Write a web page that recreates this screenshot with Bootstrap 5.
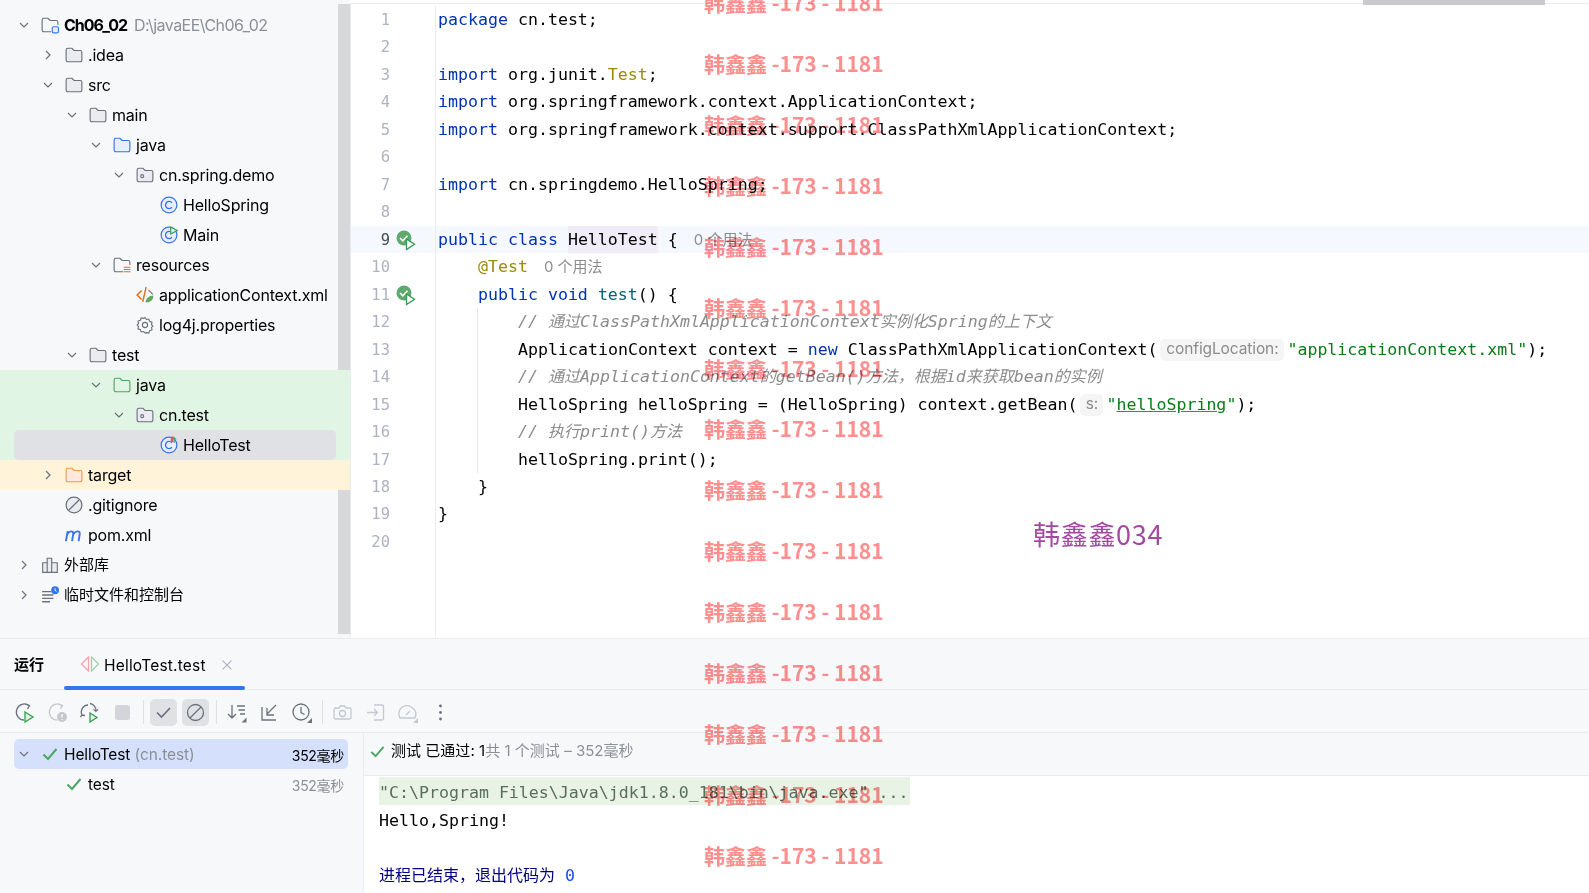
<!doctype html>
<html lang="zh"><head><meta charset="utf-8"><title>HelloTest</title>
<link href="https://cdn.jsdelivr.net/npm/bootstrap@5.3.0/dist/css/bootstrap.min.css" rel="stylesheet">
<style>
html,body{height:893px;overflow:hidden;background:#fff}
body{font-family:Inter,"Noto Sans CJK SC",sans-serif;color:#000}
.ide{width:1589px;height:893px;overflow:hidden}
.top-area{height:638px;flex:none}
.tree-panel{width:350px;flex:none;background:#f7f8fa;padding-top:10px;font-size:16px;letter-spacing:-.2px}
.tree-scroll{position:absolute;top:4px;right:0;width:12px;height:630px;background:rgba(0,0,0,.13)}
.trow{height:30px;position:relative;white-space:nowrap}
.trow.green{background:#e1f5e4}
.trow.amber{background:#fff3d9}
.trow.sel::before{content:"";position:absolute;left:14px;right:14px;top:0;bottom:0;background:#dfe1e5;border-radius:5px}
.trow>*{position:relative}
.lv0{padding-left:16px}.lv1{padding-left:40px}.lv2{padding-left:64px}.lv3{padding-left:88px}.lv4{padding-left:111px}.lv5{padding-left:135px}
.chev{width:16px;height:16px;flex:none}
.tico{width:18px;height:18px;flex:none;margin:0 5px 0 9px}
.pname{font-weight:700;letter-spacing:-1px}
.pathtxt{color:#8c8f97;margin-left:7px;letter-spacing:-.55px}
.cj15{font-size:15px;letter-spacing:0}
.editor{flex:1;min-width:0;position:relative;border-top:1px solid #ebecf0;margin-top:3px;padding-top:2px;border-left:1px solid #ebecf0;font-family:"DejaVu Sans Mono","Noto Sans CJK SC",monospace;font-size:16.6px;overflow:hidden}
.gutter{width:85px;flex:none;border-right:1px solid #ebecf0;color:#aeb3c2;font-size:15.5px}
.gl{height:27.47px;position:relative;padding-right:45px;text-align:right;line-height:29.47px}
.gl svg{position:absolute;left:45px;top:4px;width:21px;height:21px;overflow:visible}
.gl.cur{background:#f5f8fe;color:#4a4e59}
.codecol{flex:1;min-width:0}
.cl{height:27.47px;line-height:27.47px;white-space:pre;padding-left:2px}
.cl.cur{background:#f5f8fe}
.guide{margin-left:41px;border-left:1px solid #e6e7ea}
.guide .cl{padding-left:40px}
.k{color:#0033b3}.a{color:#9e880d}.s{color:#067d17}.m{color:#00627a}.c{color:#8c8c8c;font-style:italic}
.cj{font-size:16px}
.idhl{background:#f0edf8;display:inline-block;height:27.47px}
.usage{font-family:Inter,"Noto Sans CJK SC",sans-serif;color:#8c8c8c;font-size:15px;margin-left:6px}
.hint{font-family:Inter,sans-serif;font-size:15.5px;color:#8c8c8c;background:#f5f5f5;border-radius:5px;display:inline-block;height:22px;line-height:20px;text-align:center;margin:0 3px;vertical-align:1px;letter-spacing:-.1px}
.h1w{width:124px}.h2w{width:23px}
.ul{text-decoration:underline;text-decoration-color:#6c6c6c}
.thumb{position:absolute;top:0;left:1363px;width:182px;height:5px;background:#c9c9ce;z-index:3}
.bottom{height:255px;flex:none;background:#f7f8fa;border-top:1px solid #ebecf0}
.tabs{height:52px;border-bottom:1px solid #ebecf0;position:relative;font-size:15px}
.tabs .runlbl{margin-left:14px;font-weight:600;width:50px;padding-top:2px}
.tabx{width:181px;height:100%;padding-left:16px;position:relative}
.tabx::after{content:"";position:absolute;left:0;right:0;bottom:-1px;height:4px;background:#3574f0;border-radius:2px}
.tabname{margin-left:4px;font-size:15.5px;letter-spacing:.2px;padding-top:2px}
.tabclose{margin-left:14px;margin-top:2px}
.tbar{height:43px;border-bottom:1px solid #ebecf0;padding:2px 0 0 11px}
.tb{width:27px;height:27px;border-radius:5px;margin-right:5.5px;flex:none}
.tb svg{width:21px;height:21px}
.tb.on{background:#dfe1e5}
.tsep{width:1px;height:24px;background:#dfe1e5;margin:0 6px 0 1.5px;flex:none}
.res-left{width:364px;flex:none;border-right:1px solid #ebecf0;padding-top:6px;font-size:15.5px;letter-spacing:-.1px}
.rrow{height:30px;margin:0 15px 0 14px;padding-right:4px;white-space:nowrap}
.rrow.sel{background:#d5e1fc;border-radius:5px}
.rrow svg{flex:none}
.rchev{margin-left:2px}
.rchk{margin-left:10px}
.rchk2{margin-left:52px}
.rlabel{margin-left:6px;padding-top:2px}
.gray{color:#8c8f97}
.rtime{margin-left:auto;font-size:14px;letter-spacing:-.3px;padding-top:2px}
.res-right{flex:1;min-width:0}
.summary{height:43px;padding:0 0 5px 6px;font-size:15px;border-bottom:1px solid #ebecf0;white-space:nowrap}
.sumtxt{margin-left:6px;letter-spacing:.03px}
.console{background:#fff;height:117px;padding-left:15px;padding-top:1px;font-family:"DejaVu Sans Mono","Noto Sans CJK SC",monospace;font-size:16.6px}
.con{height:27.47px;line-height:31px;white-space:pre}
.con.cmd{background:#e8f3e6;width:531px;height:28px;color:#5a6e5c}
.exit{color:#000080}.num{color:#1750eb}
.wm{position:absolute;left:704px;top:-28px;z-index:5;pointer-events:none;mix-blend-mode:multiply}
.wm div{height:60.93px;line-height:60.93px;font-size:21px;font-weight:700;color:#ff8f8f;white-space:pre;font-family:"Noto Sans CJK SC",sans-serif}
.wm2{position:absolute;left:1033px;top:514px;z-index:5;font-size:27px;line-height:40px;color:#a349a4;font-family:"Noto Sans CJK SC",sans-serif;letter-spacing:.7px}
</style></head>
<body>
<svg width="0" height="0" class="position-absolute">
<defs>
<symbol id="cd" viewBox="0 0 16 16"><path d="M4 6l4 4 4-4" fill="none" stroke="#6c707e" stroke-width="1.2"/></symbol>
<symbol id="cr" viewBox="0 0 16 16"><path d="M6 4l4 4-4 4" fill="none" stroke="#6c707e" stroke-width="1.2"/></symbol>
<symbol id="fo" viewBox="0 0 16 16"><path d="M1 3.500A1.500 1.500 0 0 1 2.500 2h3.700l1.800 2h5.500A1.500 1.500 0 0 1 15 5.500v7a1.500 1.500 0 0 1-1.500 1.500h-11A1.500 1.500 0 0 1 1 12.500z" fill="#ebecf0" stroke="#6c707e"/></symbol>
<symbol id="fb" viewBox="0 0 16 16"><path d="M1 3.500A1.500 1.500 0 0 1 2.500 2h3.700l1.800 2h5.500A1.500 1.500 0 0 1 15 5.500v7a1.500 1.500 0 0 1-1.500 1.500h-11A1.500 1.500 0 0 1 1 12.500z" fill="#e7effd" stroke="#3574f0"/></symbol>
<symbol id="fg" viewBox="0 0 16 16"><path d="M1 3.500A1.500 1.500 0 0 1 2.500 2h3.700l1.800 2h5.500A1.500 1.500 0 0 1 15 5.500v7a1.500 1.500 0 0 1-1.500 1.500h-11A1.500 1.500 0 0 1 1 12.500z" fill="#e1f5e4" stroke="#4da565"/></symbol>
<symbol id="fy" viewBox="0 0 16 16"><path d="M1 3.500A1.500 1.500 0 0 1 2.500 2h3.700l1.800 2h5.500A1.500 1.500 0 0 1 15 5.500v7a1.500 1.500 0 0 1-1.500 1.500h-11A1.500 1.500 0 0 1 1 12.500z" fill="#ffe9dc" stroke="#f2994f"/></symbol>
<symbol id="fp" viewBox="0 0 16 16"><path d="M1 3.500A1.500 1.500 0 0 1 2.500 2h3.700l1.800 2h5.500A1.500 1.500 0 0 1 15 5.500v7a1.500 1.500 0 0 1-1.500 1.500h-11A1.500 1.500 0 0 1 1 12.500z" fill="#ebecf0" stroke="#6c707e"/><circle cx="5.500" cy="9" r="1.300" fill="none" stroke="#6c707e"/></symbol>
<symbol id="fm" viewBox="0 0 16 16"><path d="M9 14H2.500A1.500 1.500 0 0 1 1 12.500v-9A1.500 1.500 0 0 1 2.500 2h3.700l1.800 2h5.500A1.500 1.500 0 0 1 15 5.500V8" fill="#f7f8fa" stroke="#6c707e"/><rect x="10" y="9.500" width="5.500" height="5.500" rx="1.300" fill="#e7effd" stroke="#3574f0"/></symbol>
<symbol id="fr" viewBox="0 0 16 16"><path d="M9 14H2.500A1.500 1.500 0 0 1 1 12.500v-9A1.500 1.500 0 0 1 2.500 2h3.700l1.800 2h5.500A1.500 1.500 0 0 1 15 5.500V8" fill="#f7f8fa" stroke="#6c707e"/><path d="M9.500 10h6M9.500 12h6M9.500 14h6" stroke="#e66d17" stroke-width="1.100"/></symbol>
<symbol id="cc" viewBox="0 0 16 16"><circle cx="8" cy="8" r="7" fill="#e7effd" stroke="#3574f0" stroke-width="1.100"/><path d="M10.600 6A3.200 3.200 0 1 0 10.600 10" fill="none" stroke="#3574f0" stroke-width="1.200"/></symbol>
<symbol id="cm" viewBox="0 0 16 16"><circle cx="8" cy="8" r="7" fill="#e7effd" stroke="#3574f0" stroke-width="1.100"/><path d="M10.600 6A3.200 3.200 0 1 0 10.600 10" fill="none" stroke="#3574f0" stroke-width="1.200"/><path d="M9.500 .8l5.800 3.200-5.800 3.200z" fill="#e1f5e4" stroke="#2f9e4f"/></symbol>
<symbol id="ct" viewBox="0 0 16 16"><circle cx="8" cy="8" r="7" fill="#e7effd" stroke="#3574f0" stroke-width="1.100"/><path d="M10.600 6A3.200 3.200 0 1 0 10.600 10" fill="none" stroke="#3574f0" stroke-width="1.200"/><path d="M9.500 .5h2.300v5H9.500z" fill="#e55765"/><path d="M12 0l2.800 3h-1.500v3h-1.300z" fill="#4da565"/></symbol>
<symbol id="xm" viewBox="0 0 16 16"><path d="M5 4L1 8l4 4M9 1L6 14" fill="none" stroke="#e66d17" stroke-width="1.300"/><path d="M11 3.500l4 4" fill="none" stroke="#6c707e"/><path d="M15.500 8.500c0 4-3 6.500-7 6 0-3 3-6 7-6z" fill="#5fa95f"/></symbol>
<symbol id="gr" viewBox="0 0 16 16"><path d="M8 1.300l1.200 1.800 2.200-.4.700 2.100 2.100.7-.4 2.200L15 9l-1.200 1.200.4 2.200-2.100.7-.7 2.100-2.200-.4L8 15l-1.200-1.200-2.200.4-.7-2.100-2.100-.7.400-2.200L1 8l1.200-1.300-.4-2.200 2.100-.7.700-2.100 2.200.4z" fill="none" stroke="#6c707e"/><circle cx="8" cy="8" r="2.300" fill="none" stroke="#6c707e"/></symbol>
<symbol id="ig" viewBox="0 0 16 16"><circle cx="8" cy="8" r="7" fill="#ebecf0" stroke="#6c707e" stroke-width="1.100"/><path d="M3.500 12.500l9-9" stroke="#6c707e" stroke-width="1.100"/></symbol>
<symbol id="mv" viewBox="0 0 16 16"><path d="M.8 13.500l1.600-9M2.100 7.500C3.300 4.500 7.500 3.500 7.300 7L6.300 13.500M7.400 7.500c1.300-3 5.900-4 5.700-.5l-1 6.500" fill="none" stroke="#3574f0" stroke-width="1.700"/></symbol>
<symbol id="lb" viewBox="0 0 16 16"><path d="M1.500 6h4v8.500h-4zM5.500 2h4v12.500h-4zM9.500 6h5v8.500h-5z" fill="#ebecf0" stroke="#6c707e"/></symbol>
<symbol id="sc" viewBox="0 0 16 16"><path d="M1 5h8M1 8h10M1 11h10M1 14h7" stroke="#6c707e" stroke-width="1.200"/><circle cx="12.500" cy="3.800" r="3.500" fill="#3574f0"/><path d="M12.500 2v2l1.300 .8" stroke="#fff" fill="none" stroke-width=".8"/></symbol>
<symbol id="gt" viewBox="0 0 21 21"><path d="M8 .5a7.500 7.500 0 1 0 0 15 7.500 7.500 0 0 0 0-15z" fill="#5fa96f"/><path d="M4 8l2.800 2.800 4.700-5" fill="none" stroke="#fff" stroke-width="1.600"/><path d="M10.500 9l8 5.300-8 5.300z" fill="#fff" stroke="#2f9e4f" stroke-width="1.300"/></symbol>
<symbol id="ok" viewBox="0 0 16 16"><path d="M1.500 8.500L6 13l8.500-10" fill="none" stroke="#4da565" stroke-width="2"/></symbol>
<symbol id="x" viewBox="0 0 16 16"><path d="M3 3l10 10M13 3L3 13" stroke="#a8adbd" stroke-width="1.200"/></symbol>
<symbol id="tabi" viewBox="0 0 20 16"><path d="M8.500 1L1.500 8l7 7z" fill="none" stroke="#f2a5ac" stroke-width="1.300"/><path d="M11.500 1l7 7-7 7z" fill="none" stroke="#9fd3ac" stroke-width="1.300"/></symbol>
<symbol id="t1" viewBox="0 0 21 21"><path d="M15 3.500A8 8 0 1 0 10 18" fill="none" stroke="#6c707e" stroke-width="1.300"/><path d="M11 2l4.500 1.500L13.500 7" fill="none" stroke="#6c707e" stroke-width="1.300"/><path d="M11 10l8 5-8 5z" fill="#e1f5e4" stroke="#2f9e4f" stroke-width="1.300"/></symbol>
<symbol id="t2" viewBox="0 0 21 21"><path d="M15 3.500A8 8 0 1 0 10 18" fill="none" stroke="#c5c8d0" stroke-width="1.300"/><path d="M11 2l4.500 1.500L13.500 7" fill="none" stroke="#c5c8d0" stroke-width="1.300"/><circle cx="15" cy="15" r="5" fill="#c5c8d0"/><path d="M15 12v3.500M15 17v1" stroke="#fff" stroke-width="1.200"/></symbol>
<symbol id="t3" viewBox="0 0 21 21"><path d="M9 3A7 7 0 0 0 3 13l-1.500 2M3 13l3 .5M11 1.500A7 7 0 0 1 17 9l2-1.500M17 9l-2.500-1.500" fill="none" stroke="#6c707e" stroke-width="1.300"/><path d="M11 11l7 4.500-7 4.500z" fill="#e1f5e4" stroke="#2f9e4f" stroke-width="1.300"/></symbol>
<symbol id="t4" viewBox="0 0 21 21"><rect x="3" y="3" width="15" height="15" rx="2.500" fill="#d3d5db"/></symbol>
<symbol id="t5" viewBox="0 0 21 21"><path d="M4 10.500l4.500 4.500L17 6" fill="none" stroke="#6c707e" stroke-width="1.700"/></symbol>
<symbol id="t6" viewBox="0 0 21 21"><circle cx="10.500" cy="10.500" r="8" fill="none" stroke="#6c707e" stroke-width="1.300"/><path d="M5 16L16 5" stroke="#6c707e" stroke-width="1.300"/></symbol>
<symbol id="t7" viewBox="0 0 21 21"><path d="M6 3v13M2 12l4 4 4-4M11 4h8M12.500 8h6.500M14 12h5" fill="none" stroke="#6c707e" stroke-width="1.300"/><path d="M20.500 15.500v5h-5z" fill="#6c707e"/></symbol>
<symbol id="t8" viewBox="0 0 21 21"><path d="M3 5v13h14M17 3L8 12M8 6v7h7" fill="none" stroke="#6c707e" stroke-width="1.300"/></symbol>
<symbol id="t9" viewBox="0 0 21 21"><circle cx="10" cy="10" r="8" fill="none" stroke="#6c707e" stroke-width="1.300"/><path d="M10 5v5.500l3.500 2" fill="none" stroke="#6c707e" stroke-width="1.300"/><path d="M21 16v5h-5z" fill="#6c707e"/></symbol>
<symbol id="t10" viewBox="0 0 21 21"><path d="M2 7.500A1.500 1.500 0 0 1 3.500 6H7l1.500-2h4L14 6h3.500A1.500 1.500 0 0 1 19 7.500v8a1.500 1.500 0 0 1-1.500 1.500h-14A1.500 1.500 0 0 1 2 15.500z" fill="none" stroke="#c5c8d0" stroke-width="1.300"/><circle cx="10.500" cy="11.500" r="3" fill="none" stroke="#c5c8d0" stroke-width="1.300"/></symbol>
<symbol id="t11" viewBox="0 0 21 21"><path d="M9 3h8a1.500 1.500 0 0 1 1.500 1.500v12A1.500 1.500 0 0 1 17 18H9M2 10.500h10M9 7l3.500 3.500L9 14" fill="none" stroke="#c5c8d0" stroke-width="1.300"/></symbol>
<symbol id="t12" viewBox="0 0 21 21"><path d="M3 16a8 8 0 0 1 14-8.500l1 1a8 8 0 0 1 0 7.500z" fill="none" stroke="#c5c8d0" stroke-width="1.300"/><path d="M9 13l4-4" stroke="#c5c8d0" stroke-width="1.300"/><path d="M21 16v5h-5z" fill="#c5c8d0"/></symbol>
</defs></svg>

<div class="ide d-flex flex-column position-relative">
<div class="thumb"></div>
<div class="top-area d-flex">
 <aside class="tree-panel position-relative">
  <div class="tree-scroll"></div>
  <div class="trow lv0 d-flex align-items-center"><svg class="chev"><use href="#cd"/></svg><svg class="tico"><use href="#fm"/></svg><span class="pname">Ch06_02</span><span class="pathtxt">D:\javaEE\Ch06_02</span></div>
  <div class="trow lv1 d-flex align-items-center"><svg class="chev"><use href="#cr"/></svg><svg class="tico"><use href="#fo"/></svg><span>.idea</span></div>
  <div class="trow lv1 d-flex align-items-center"><svg class="chev"><use href="#cd"/></svg><svg class="tico"><use href="#fo"/></svg><span>src</span></div>
  <div class="trow lv2 d-flex align-items-center"><svg class="chev"><use href="#cd"/></svg><svg class="tico"><use href="#fo"/></svg><span>main</span></div>
  <div class="trow lv3 d-flex align-items-center"><svg class="chev"><use href="#cd"/></svg><svg class="tico"><use href="#fb"/></svg><span>java</span></div>
  <div class="trow lv4 d-flex align-items-center"><svg class="chev"><use href="#cd"/></svg><svg class="tico"><use href="#fp"/></svg><span>cn.spring.demo</span></div>
  <div class="trow lv5 d-flex align-items-center"><svg class="chev"></svg><svg class="tico"><use href="#cc"/></svg><span>HelloSpring</span></div>
  <div class="trow lv5 d-flex align-items-center"><svg class="chev"></svg><svg class="tico"><use href="#cm"/></svg><span>Main</span></div>
  <div class="trow lv3 d-flex align-items-center"><svg class="chev"><use href="#cd"/></svg><svg class="tico"><use href="#fr"/></svg><span>resources</span></div>
  <div class="trow lv4 d-flex align-items-center"><svg class="chev"></svg><svg class="tico"><use href="#xm"/></svg><span>applicationContext.xml</span></div>
  <div class="trow lv4 d-flex align-items-center"><svg class="chev"></svg><svg class="tico"><use href="#gr"/></svg><span>log4j.properties</span></div>
  <div class="trow lv2 d-flex align-items-center"><svg class="chev"><use href="#cd"/></svg><svg class="tico"><use href="#fo"/></svg><span>test</span></div>
  <div class="trow green lv3 d-flex align-items-center"><svg class="chev"><use href="#cd"/></svg><svg class="tico"><use href="#fg"/></svg><span>java</span></div>
  <div class="trow green lv4 d-flex align-items-center"><svg class="chev"><use href="#cd"/></svg><svg class="tico"><use href="#fp"/></svg><span>cn.test</span></div>
  <div class="trow green sel lv5 d-flex align-items-center"><svg class="chev"></svg><svg class="tico"><use href="#ct"/></svg><span>HelloTest</span></div>
  <div class="trow amber lv1 d-flex align-items-center"><svg class="chev"><use href="#cr"/></svg><svg class="tico"><use href="#fy"/></svg><span>target</span></div>
  <div class="trow lv1 d-flex align-items-center"><svg class="chev"></svg><svg class="tico"><use href="#ig"/></svg><span>.gitignore</span></div>
  <div class="trow lv1 d-flex align-items-center"><svg class="chev"></svg><svg class="tico"><use href="#mv"/></svg><span>pom.xml</span></div>
  <div class="trow lv0 d-flex align-items-center"><svg class="chev"><use href="#cr"/></svg><svg class="tico"><use href="#lb"/></svg><span class="cj15">外部库</span></div>
  <div class="trow lv0 d-flex align-items-center"><svg class="chev"><use href="#cr"/></svg><svg class="tico"><use href="#sc"/></svg><span class="cj15">临时文件和控制台</span></div>
 </aside>
 <main class="editor d-flex">
  <div class="gutter">
   <div class="gl">1</div><div class="gl">2</div><div class="gl">3</div><div class="gl">4</div><div class="gl">5</div><div class="gl">6</div><div class="gl">7</div><div class="gl">8</div>
   <div class="gl cur">9<svg><use href="#gt"/></svg></div><div class="gl">10</div><div class="gl">11<svg><use href="#gt"/></svg></div>
   <div class="gl">12</div><div class="gl">13</div><div class="gl">14</div><div class="gl">15</div><div class="gl">16</div><div class="gl">17</div><div class="gl">18</div><div class="gl">19</div><div class="gl">20</div>
  </div>
  <div class="codecol">
<div class="cl"><span class="k">package</span> cn.test;</div>
<div class="cl"></div>
<div class="cl"><span class="k">import</span> org.junit.<span class="a">Test</span>;</div>
<div class="cl"><span class="k">import</span> org.springframework.context.ApplicationContext;</div>
<div class="cl"><span class="k">import</span> org.springframework.context.support.ClassPathXmlApplicationContext;</div>
<div class="cl"></div>
<div class="cl"><span class="k">import</span> cn.springdemo.HelloSpring;</div>
<div class="cl"></div>
<div class="cl cur"><span class="k">public class</span> <span class="idhl">HelloTest</span> { <span class="usage">0 个用法</span></div>
<div class="cl">    <span class="a">@Test</span> <span class="usage">0 个用法</span></div>
<div class="cl">    <span class="k">public void</span> <span class="m">test</span>() {</div>
<div class="guide">
<div class="cl"><span class="c">// <span class="cj">通过</span>ClassPathXmlApplicationContext<span class="cj">实例化</span>Spring<span class="cj">的上下文</span></span></div>
<div class="cl">ApplicationContext context = <span class="k">new</span> ClassPathXmlApplicationContext(<span class="hint h1w">configLocation:</span><span class="s">"applicationContext.xml"</span>);</div>
<div class="cl"><span class="c">// <span class="cj">通过</span>ApplicationContext<span class="cj">的</span>getBean()<span class="cj">方法，根据</span>id<span class="cj">来获取</span>bean<span class="cj">的实例</span></span></div>
<div class="cl">HelloSpring helloSpring = (HelloSpring) context.getBean(<span class="hint h2w">s:</span><span class="s">"<span class="ul">helloSpring</span>"</span>);</div>
<div class="cl"><span class="c">// <span class="cj">执行</span>print()<span class="cj">方法</span></span></div>
<div class="cl">helloSpring.print();</div>
</div>
<div class="cl">    }</div>
<div class="cl">}</div>
<div class="cl"></div>
  </div>
 </main>
</div>
<section class="bottom d-flex flex-column">
 <div class="tabs d-flex align-items-center">
  <span class="runlbl">运行</span>
  <div class="tabx d-flex align-items-center"><svg width="20" height="16"><use href="#tabi"/></svg><span class="tabname">HelloTest.test</span><svg class="tabclose" width="14" height="14"><use href="#x"/></svg></div>
 </div>
 <div class="tbar d-flex align-items-center">
  <div class="tb d-flex align-items-center justify-content-center"><svg><use href="#t1"/></svg></div>
  <div class="tb d-flex align-items-center justify-content-center"><svg><use href="#t2"/></svg></div>
  <div class="tb d-flex align-items-center justify-content-center"><svg><use href="#t3"/></svg></div>
  <div class="tb d-flex align-items-center justify-content-center"><svg><use href="#t4"/></svg></div>
  <div class="tsep"></div>
  <div class="tb on d-flex align-items-center justify-content-center"><svg><use href="#t5"/></svg></div>
  <div class="tb on d-flex align-items-center justify-content-center"><svg><use href="#t6"/></svg></div>
  <div class="tsep"></div>
  <div class="tb d-flex align-items-center justify-content-center"><svg><use href="#t7"/></svg></div>
  <div class="tb d-flex align-items-center justify-content-center"><svg><use href="#t8"/></svg></div>
  <div class="tb d-flex align-items-center justify-content-center"><svg><use href="#t9"/></svg></div>
  <div class="tsep"></div>
  <div class="tb d-flex align-items-center justify-content-center"><svg><use href="#t10"/></svg></div>
  <div class="tb d-flex align-items-center justify-content-center"><svg><use href="#t11"/></svg></div>
  <div class="tb d-flex align-items-center justify-content-center"><svg><use href="#t12"/></svg></div>
  <div class="tb d-flex align-items-center justify-content-center"><svg viewBox="0 0 21 21"><circle cx="10.500" cy="4" r="1.400" fill="#6c707e"/><circle cx="10.500" cy="10.500" r="1.400" fill="#6c707e"/><circle cx="10.500" cy="17" r="1.400" fill="#6c707e"/></svg></div>
 </div>
 <div class="d-flex flex-grow-1">
  <div class="res-left">
   <div class="rrow sel d-flex align-items-center"><svg class="chev rchev"><use href="#cd"/></svg><svg class="rchk" width="16" height="16"><use href="#ok"/></svg><span class="rlabel">HelloTest <span class="gray">(cn.test)</span></span><span class="rtime">352毫秒</span></div>
   <div class="rrow d-flex align-items-center"><svg class="rchk2" width="16" height="16"><use href="#ok"/></svg><span class="rlabel">test</span><span class="rtime gray">352毫秒</span></div>
  </div>
  <div class="res-right">
   <div class="summary d-flex align-items-center"><svg width="15" height="15"><use href="#ok"/></svg><span class="sumtxt">测试 已通过: 1<span class="gray">共 1 个测试 – 352毫秒</span></span></div>
   <div class="console">
<div class="con cmd">"C:\Program Files\Java\jdk1.8.0_181\bin\java.exe" ...</div>
<div class="con">Hello,Spring!</div>
<div class="con"></div>
<div class="con exit"><span class="cj">进程已结束，退出代码为</span> <span class="num">0</span></div>
   </div>
  </div>
 </div>
</section>
<div class="wm">
<div>韩鑫鑫 -173 - 1181</div><div>韩鑫鑫 -173 - 1181</div><div>韩鑫鑫 -173 - 1181</div><div>韩鑫鑫 -173 - 1181</div><div>韩鑫鑫 -173 - 1181</div><div>韩鑫鑫 -173 - 1181</div><div>韩鑫鑫 -173 - 1181</div><div>韩鑫鑫 -173 - 1181</div><div>韩鑫鑫 -173 - 1181</div><div>韩鑫鑫 -173 - 1181</div><div>韩鑫鑫 -173 - 1181</div><div>韩鑫鑫 -173 - 1181</div><div>韩鑫鑫 -173 - 1181</div><div>韩鑫鑫 -173 - 1181</div><div>韩鑫鑫 -173 - 1181</div>
</div>
<div class="wm2">韩鑫鑫034</div>
</div>
<script src="https://cdn.jsdelivr.net/npm/bootstrap@5.3.0/dist/js/bootstrap.bundle.min.js"></script>
</body></html>
